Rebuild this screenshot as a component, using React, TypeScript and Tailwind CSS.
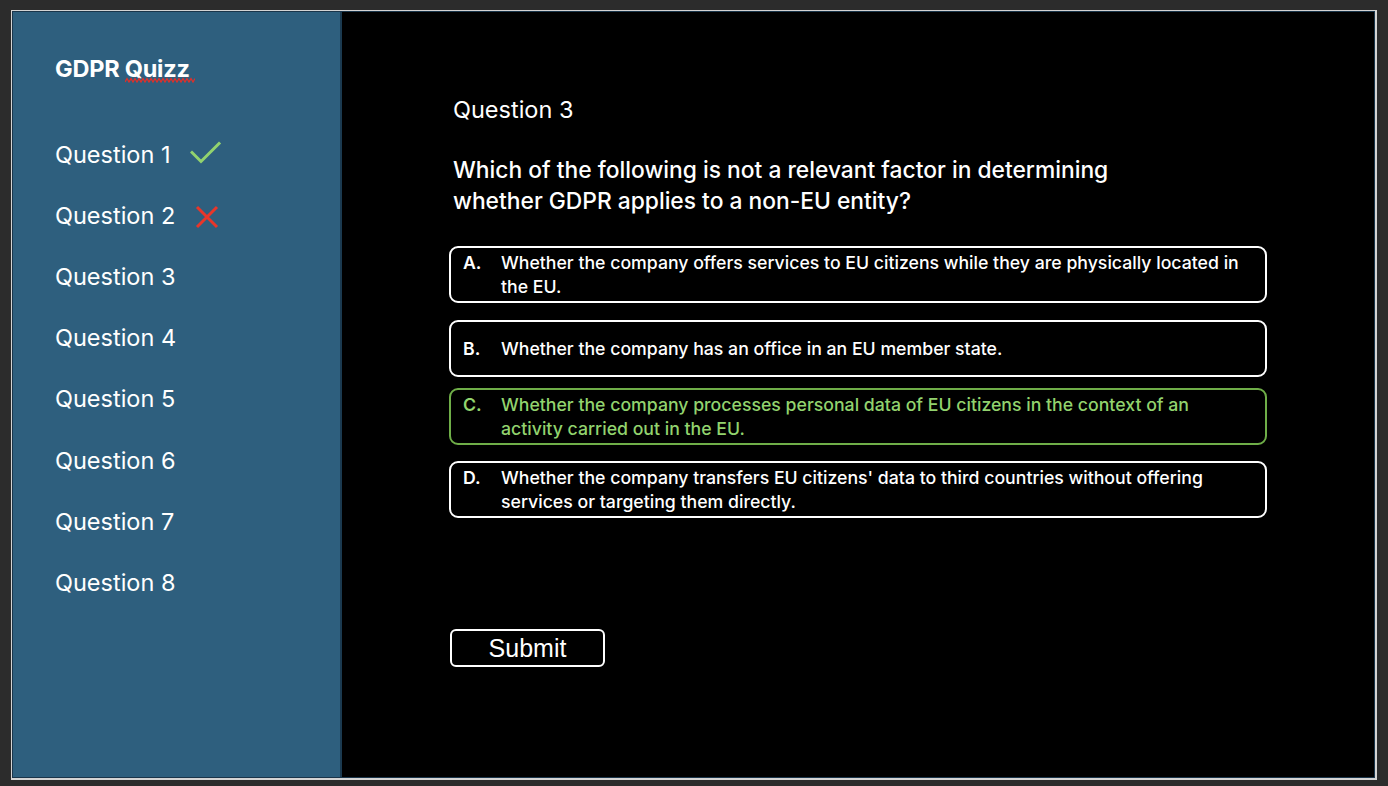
import React from "react";

const options = [
  { l: "A.", t: "Whether the company offers services to EU citizens while they are physically located in the EU.", mt: "mt-[30px]", correct: false },
  { l: "B.", t: "Whether the company has an office in an EU member state.", mt: "mt-[17px]", correct: false },
  { l: "C.", t: "Whether the company processes personal data of EU citizens in the context of an activity carried out in the EU.", mt: "mt-[11px]", correct: true },
  { l: "D.", t: "Whether the company transfers EU citizens' data to third countries without offering services or targeting them directly.", mt: "mt-[16px]", correct: false },
];

function Check() {
  return (
    <svg width="32" height="24" viewBox="0 0 32 24" className="ml-[19px] mt-[-4px]">
      <path d="M2 11.5 L11 20.5 L29 2.5" fill="none" stroke="#92d36e" strokeWidth="3" strokeLinecap="square" />
    </svg>
  );
}

function Cross() {
  return (
    <svg width="26" height="26" viewBox="0 0 26 26" className="ml-[19px] mt-[2px]">
      <path d="M3 3 L23 23 M23 3 L3 23" fill="none" stroke="#e8362a" strokeWidth="3" />
    </svg>
  );
}

export default function App() {
  const font = { fontFamily: "Inter, 'Noto Sans', sans-serif" };
  let squiggle = "M0 5";
  for (let i = 1; i <= 35; i++) squiggle += ` L${i * 2} ${i % 2 ? 1.5 : 5}`;
  return (
    <div className="w-[1388px] h-[786px] bg-[#2c2c2c] pt-[10px] pl-[11px]" style={font}>
      <div className="w-[1366px] h-[770px] border border-r-2 border-b-2 border-[#d4d4d4]">
        <div className="w-full h-full border border-[#1a354a] flex">
          <aside className="w-[329px] h-full bg-[#2e5f7e] border-r-2 border-[#1b3a50] pl-[42px] pt-[42px] text-white">
            <div className="text-[23.5px] font-bold leading-[30px] tracking-[-0.01em]">
              GDPR{" "}
              <span className="relative inline-block">
                Quizz
                <svg className="absolute left-[0px] top-[23px]" width="70" height="7" viewBox="0 0 70 7">
                  <path d={squiggle} fill="none" stroke="#e0302a" strokeWidth="1.3" />
                </svg>
              </span>
            </div>
            <div className="mt-[40px] flex flex-col">
              {[1, 2, 3, 4, 5, 6, 7, 8].map((n) => (
                <div key={n} className="h-[61.2px] flex items-center text-[23.5px] leading-[30px]">
                  <span>Question {n}</span>
                  {n === 1 && <Check />}
                  {n === 2 && <Cross />}
                </div>
              ))}
            </div>
          </aside>
          <main className="flex-1 h-full bg-black text-white pl-[107px] flex flex-col">
            <div className="mt-[83px] pl-[4px] text-[23.5px] leading-[30px]">Question 3</div>
            <div className="mt-[29px] pl-[4px] text-[22.8px] leading-[31px] font-medium w-[720px]">
              Which of the following is not a relevant factor in determining whether GDPR applies to a non-EU entity?
            </div>
            {options.map((o) => (
              <div
                key={o.l}
                className={`${o.mt} w-[818px] h-[57px] rounded-[9px] border-2 flex items-center pl-[12px] pr-[16px] ${
                  o.correct ? "border-[#6fae48] text-[#92d36e]" : "border-white text-white"
                }`}
              >
                <div className="flex text-[17.7px] leading-[24px] font-medium">
                  <span className="w-[38px] shrink-0 font-semibold">{o.l}</span>
                  <span>{o.t}</span>
                </div>
              </div>
            ))}
            <button
              className="mt-[111px] ml-[1px] w-[155px] h-[38px] rounded-[6px] border-2 border-white text-white text-[25px] leading-[30px] flex items-center justify-center"
              style={{ fontFamily: "'Liberation Sans', Arial, sans-serif" }}
            >
              Submit
            </button>
          </main>
        </div>
      </div>
    </div>
  );
}
